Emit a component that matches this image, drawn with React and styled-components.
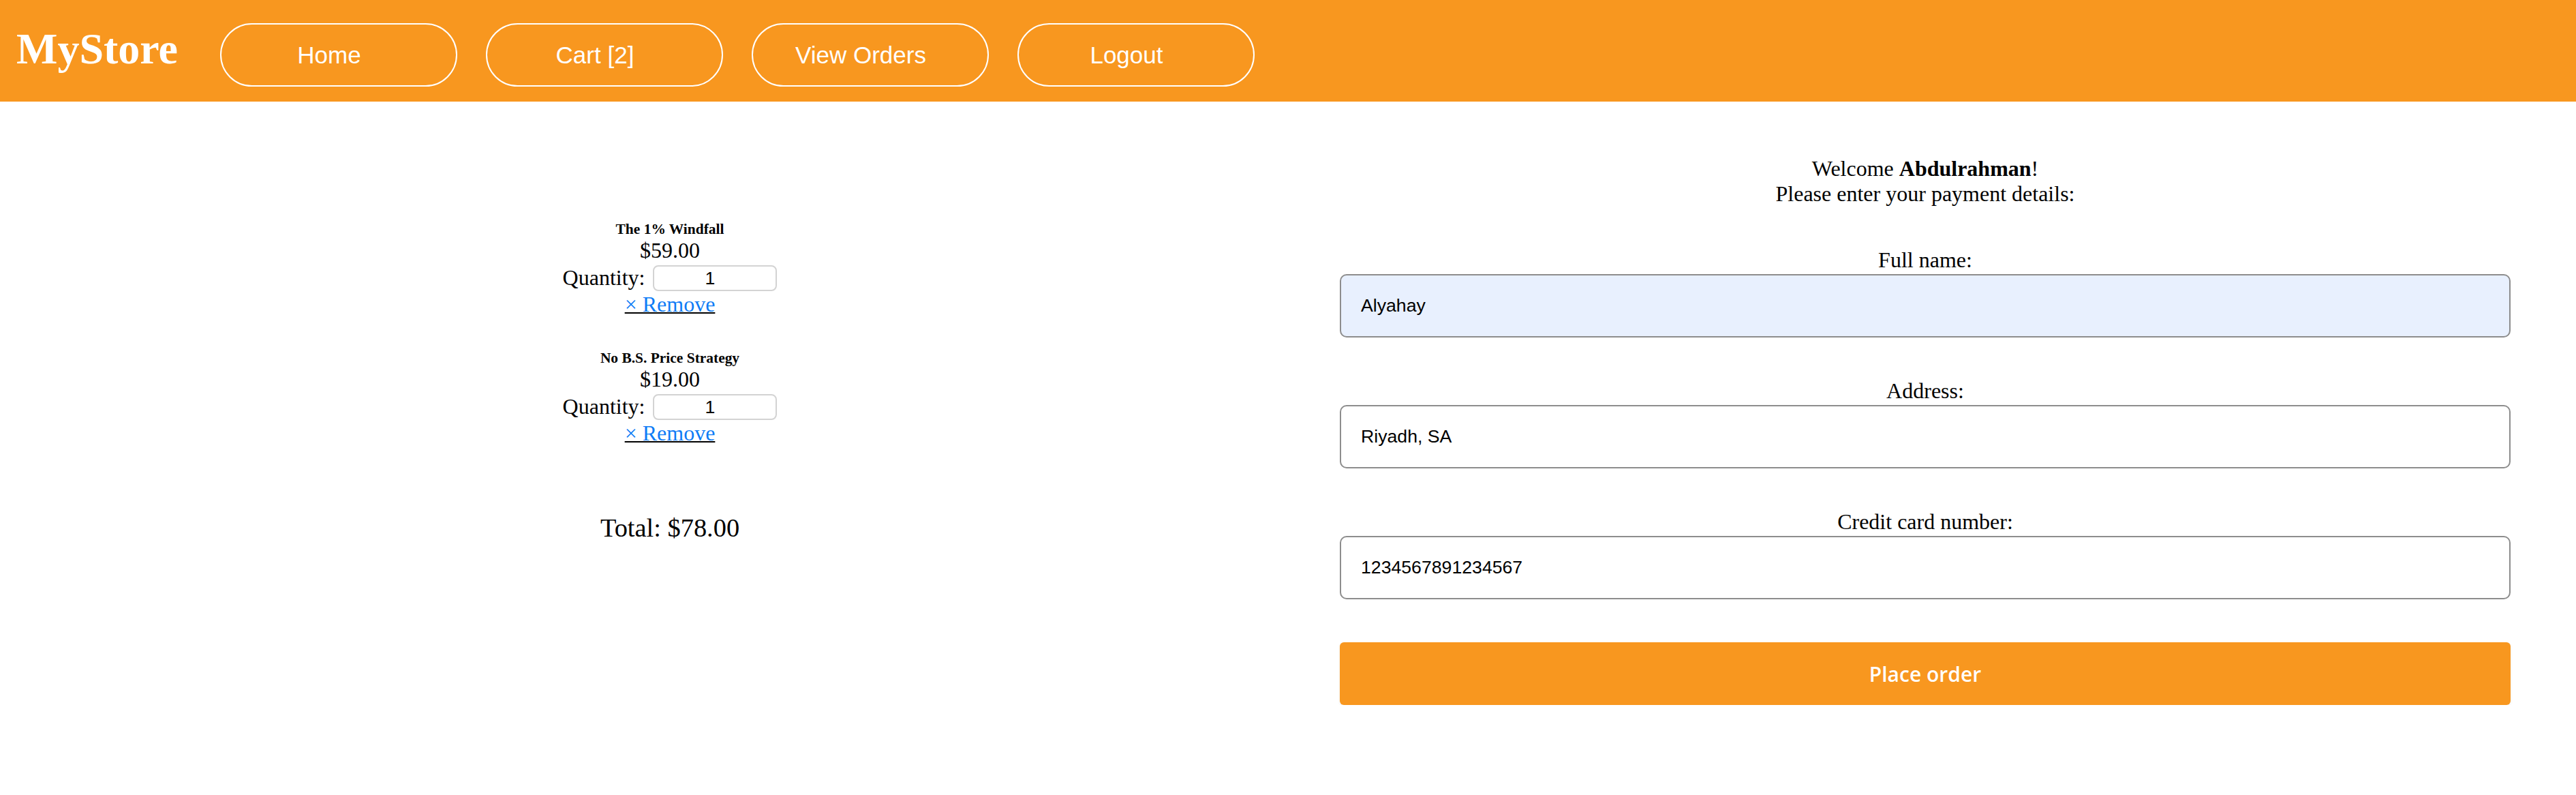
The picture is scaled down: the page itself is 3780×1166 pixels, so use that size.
import React from "react";
import styled, { createGlobalStyle } from "styled-components";

const GlobalStyle = createGlobalStyle`
  body {
    margin: 0;
    font-family: "Liberation Serif", "Times New Roman", serif;
    color: #000;
    background: #fff;
  }
`;

const Header = styled.header`
  display: flex;
  align-items: center;
  height: 149px;
  padding-left: 24px;
  background-color: #f8971f;
`;

const Logo = styled.div`
  font-size: 64px;
  font-weight: bold;
  color: #fff;
  margin: 0 62px 6px 0;
`;

const Nav = styled.nav`
  display: flex;
  gap: 42px;
  margin-top: 12px;
`;

const NavButton = styled.button`
  box-sizing: border-box;
  width: 348px;
  height: 93px;
  padding: 0 28px 0 0;
  background: transparent;
  border: 2px solid #fff;
  border-radius: 50px;
  color: #fff;
  font-family: "Liberation Sans", Arial, sans-serif;
  font-size: 35px;
  cursor: pointer;
`;

const Main = styled.main`
  display: grid;
  grid-template-columns: 1966px 1718px;
  padding-top: 80px;
`;

const CartColumn = styled.section`
  display: flex;
  flex-direction: column;
  align-items: center;
  text-align: center;
  padding-top: 95px;
`;

const ItemList = styled.ul`
  list-style: none;
  margin: 0;
  padding: 0;
  display: flex;
  flex-direction: column;
  gap: 48px;
`;

const Item = styled.li`
  display: flex;
  flex-direction: column;
  align-items: center;
`;

const ItemTitle = styled.h6`
  margin: 0;
  font-size: 21.44px;
  line-height: 25px;
  font-weight: bold;
`;

const Price = styled.div`
  font-size: 32px;
  line-height: 37px;
`;

const QuantityRow = styled.label`
  display: flex;
  align-items: center;
  gap: 12px;
  height: 42px;
  font-size: 32px;
  line-height: 37px;
`;

const QuantityInput = styled.input`
  box-sizing: border-box;
  width: 182px;
  height: 38px;
  margin-top: 2px;
  border: 2px solid #d3d3d3;
  border-radius: 8px;
  text-align: center;
  font-family: "Liberation Sans", Arial, sans-serif;
  font-size: 26.67px;
  color: #000;
`;

const RemoveLink = styled.a`
  font-size: 32px;
  line-height: 37px;
  color: #0f7cf6;
  text-decoration: underline;
  text-decoration-color: #000;
  text-decoration-thickness: 2px;
  cursor: pointer;
`;

const Total = styled.div`
  margin-top: 98px;
  font-size: 38.4px;
  line-height: 44px;
`;

const Form = styled.form`
  display: flex;
  flex-direction: column;
`;

const Intro = styled.p`
  margin: 0;
  text-align: center;
  font-size: 32px;
  line-height: 37px;
`;

const Field = styled.div`
  display: flex;
  flex-direction: column;
  margin-top: 60px;
`;

const FieldLabel = styled.label`
  text-align: center;
  font-size: 32px;
  line-height: 37px;
  margin-bottom: 2px;
`;

const TextInput = styled.input`
  box-sizing: border-box;
  width: 100%;
  height: 93px;
  padding: 0 29px;
  border: 2px solid #8d8d8d;
  border-radius: 10px;
  background: ${({ $filled }) => ($filled ? "#e8f0fe" : "#fff")};
  font-family: "Liberation Sans", Arial, sans-serif;
  font-size: 26.67px;
  color: #000;
  outline: none;
`;

const SubmitButton = styled.button`
  margin-top: 63px;
  height: 92px;
  border: none;
  border-radius: 6px;
  background-color: #f8971f;
  box-shadow: 0 2px 4px rgba(0, 0, 0, 0.06);
  color: #fff;
  font-family: "Open Sans", "Noto Sans", sans-serif;
  font-weight: 600;
  font-size: 30px;
  cursor: pointer;
`;

const cartItems = [
  { id: 1, title: "The 1% Windfall", price: 59, quantity: 1 },
  { id: 2, title: "No B.S. Price Strategy", price: 19, quantity: 1 },
];

const fields = [
  { id: "name", label: "Full name:", value: "Alyahay", filled: true },
  { id: "address", label: "Address:", value: "Riyadh, SA" },
  { id: "card", label: "Credit card number:", value: "1234567891234567" },
];

const App = () => {
  const total = cartItems.reduce((sum, item) => sum + item.price * item.quantity, 0);

  return (
    <>
      <GlobalStyle />
      <Header>
        <Logo>MyStore</Logo>
        <Nav>
          <NavButton>Home</NavButton>
          <NavButton>Cart [{cartItems.length}]</NavButton>
          <NavButton>View Orders</NavButton>
          <NavButton>Logout</NavButton>
        </Nav>
      </Header>
      <Main>
        <CartColumn>
          <ItemList>
            {cartItems.map((item) => (
              <Item key={item.id}>
                <ItemTitle>{item.title}</ItemTitle>
                <Price>${item.price.toFixed(2)}</Price>
                <QuantityRow>
                  Quantity:
                  <QuantityInput type="number" defaultValue={item.quantity} />
                </QuantityRow>
                <RemoveLink>× Remove</RemoveLink>
              </Item>
            ))}
          </ItemList>
          <Total>Total: ${total.toFixed(2)}</Total>
        </CartColumn>
        <Form onSubmit={(e) => e.preventDefault()}>
          <Intro>
            Welcome <b>Abdulrahman</b>!
            <br />
            Please enter your payment details:
          </Intro>
          {fields.map((field) => (
            <Field key={field.id}>
              <FieldLabel htmlFor={field.id}>{field.label}</FieldLabel>
              <TextInput id={field.id} defaultValue={field.value} $filled={field.filled} />
            </Field>
          ))}
          <SubmitButton type="submit">Place order</SubmitButton>
        </Form>
      </Main>
    </>
  );
};

export default App;
